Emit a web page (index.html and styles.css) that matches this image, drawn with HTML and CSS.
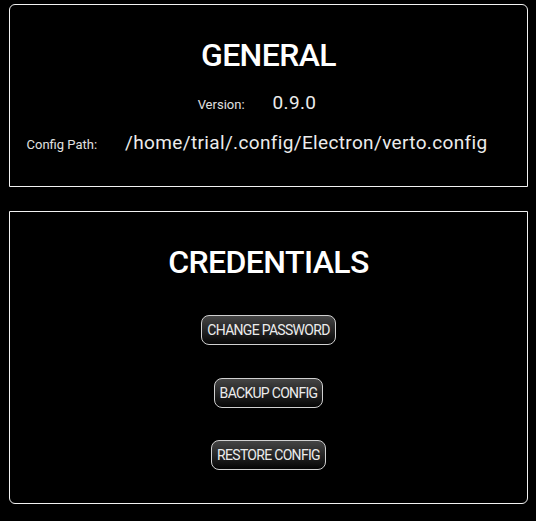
FILE: index.html
```html
<!DOCTYPE html>
<html>
<head>
<meta charset="utf-8">
<link rel="stylesheet" href="styles.css">
</head>
<body>
  <section class="card card-top">
    <h2 class="title">GENERAL</h2>
    <div class="row">
      <span class="label">Version:</span>
      <span class="value">0.9.0</span>
    </div>
    <div class="row row-second">
      <span class="label">Config Path:</span>
      <span class="value">/home/trial/.config/Electron/verto.config</span>
    </div>
  </section>
  <section class="card card-bottom">
    <h2 class="title">CREDENTIALS</h2>
    <div class="buttons">
      <button class="btn">CHANGE PASSWORD</button>
      <button class="btn">BACKUP CONFIG</button>
      <button class="btn btn-last">RESTORE CONFIG</button>
    </div>
  </section>
</body>
</html>
```
FILE: styles.css
```css
html, body {
  background: #000;
}
body {
  margin: 0;
  padding: 4px 8px 0 9px;
  font-family: Roboto, "Liberation Sans", sans-serif;
  color: #e8e8e8;
}
.card {
  border: 1px solid #f2f2f2;
  background: #000;
}
.card-top {
  border-radius: 6px 6px 0 0;
  padding: 31px 0 31px;
}
.card-bottom {
  margin-top: 24px;
  border-radius: 0 0 6px 6px;
  padding: 31px 0 33px;
}
.title {
  margin: 0;
  text-align: center;
  font-size: 32px;
  line-height: 38px;
  font-weight: 500;
  letter-spacing: -0.6px;
  color: #fff;
}
.card-top .title {
  margin-bottom: 17px;
}
.row {
  display: flex;
  justify-content: center;
  align-items: baseline;
  gap: 28px;
  padding-right: 23px;
  height: 24px;
  line-height: 24px;
}
.row-second {
  margin-top: 16px;
}
.label {
  font-size: 13px;
  color: #e0e0e0;
}
.value {
  font-size: 19px;
  letter-spacing: 0.35px;
  color: #ececec;
}
.buttons {
  display: flex;
  flex-direction: column;
  align-items: center;
  margin-top: 34px;
}
.btn {
  height: 30px;
  margin: 0 0 33px;
  padding: 0 5px;
  border: 1px solid #d0d0d0;
  border-radius: 8px;
  background: linear-gradient(#454545, #050505);
  color: #ececec;
  font-family: Roboto, "Liberation Sans", sans-serif;
  font-size: 14px;
  font-weight: 400;
  line-height: 28px;
  letter-spacing: -0.7px;
  cursor: pointer;
}
.btn:nth-child(2) {
  margin-bottom: 32px;
}
.btn-last {
  margin-bottom: 0;
}
```
